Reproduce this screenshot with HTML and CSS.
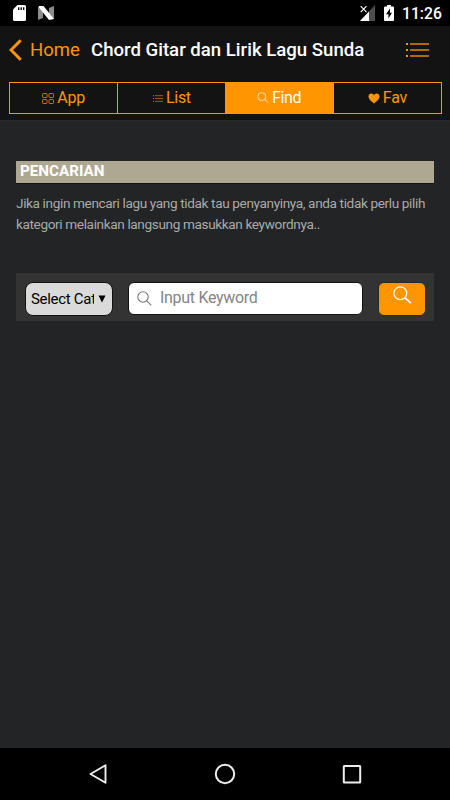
FILE: index.html
```html
<!DOCTYPE html>
<html lang="id">

<head>
    <meta charset="UTF-8">
    <meta name="viewport" content="width=device-width, initial-scale=1.0">
    <title>Chord Gitar dan Lirik Lagu Sunda</title>
    <link rel="stylesheet" href="styles.css">
</head>

<body>
    <div class="screen">
        <div class="statusbar">
            <svg class="sd-icon" width="13" height="16" viewBox="0 0 13 16">
                <path d="M4.5 0H11.5Q13 0 13 1.5V14.5Q13 16 11.5 16H1.5Q0 16 0 14.5V4.5Z" fill="#fff"/>
                <path d="M5.7 2.2V5M8.2 2.2V5M10.7 2.2V5" stroke="#000" stroke-width="1.3"/>
            </svg>
            <svg class="n-icon" width="16" height="14" viewBox="0 0 16 14">
                <path d="M0 1L5 3V12L0 14ZM16 0L11 2V11L16 13Z" fill="#8c8c8c"/>
                <path d="M1 0H5.5L16 13L11 14L0.5 1Z" fill="#fff"/>
            </svg>
            <span class="spacer"></span>
            <svg class="signal-icon" width="15" height="16" viewBox="0 0 15 16">
                <path d="M15 0V16H0Z" fill="#4c4c4c"/>
                <path d="M9 6.5V16H0Z" fill="#fff"/>
                <path d="M0 0H7V8H0Z" fill="#000"/>
                <path d="M0.7 1.2L6.5 7.2M6.5 1.2L0.7 7.2" stroke="#fff" stroke-width="1.1"/>
            </svg>
            <svg class="battery-icon" width="10" height="16" viewBox="0 0 10 16">
                <path d="M3 0H7V1.5H9Q10 1.5 10 2.5V15Q10 16 9 16H1Q0 16 0 15V2.5Q0 1.5 1 1.5H3Z" fill="#fff"/>
                <path d="M6 3.5L2 9.3H4.4V13.5L8 7.7H6Z" fill="#000"/>
            </svg>
            <span class="clock">11:26</span>
        </div>

        <div class="navbar">
            <a class="back">
                <svg width="13" height="22" viewBox="0 0 13 22">
                    <path d="M11.7 1.2L2 11L11.7 20.8" fill="none" stroke="#ff9500" stroke-width="3"/>
                </svg>
                <span>Home</span>
            </a>
            <h1 class="title">Chord Gitar dan Lirik Lagu Sunda</h1>
            <svg class="menu-icon" width="24" height="16" viewBox="0 0 24 16">
                <path d="M5 2H24M5 8H24M5 14H24" stroke="#e48500" stroke-width="1.7"/>
                <path d="M1 2H3M1 8H3M1 14H3" stroke="#ff9500" stroke-width="2.2"/>
            </svg>
        </div>

        <div class="subnavbar">
            <div class="segmented">
                <a class="tab">
                    <svg width="12" height="11" viewBox="0 0 12 11" fill="none" stroke="#c57400">
                        <rect x="0.5" y="0.5" width="4.5" height="4" rx="0.7"/>
                        <rect x="7" y="0.5" width="4.5" height="4" rx="0.7"/>
                        <rect x="0.5" y="6.5" width="4.5" height="4" rx="0.7"/>
                        <rect x="7" y="6.5" width="4.5" height="4" rx="0.7"/>
                    </svg>
                    <span>App</span>
                </a>
                <a class="tab">
                    <svg width="10" height="7" viewBox="0 0 10 7" stroke="#c57400">
                        <path d="M2 0.7H10M2 3.5H10M2 6.3H10" stroke-width="0.8"/>
                        <path d="M0 0.7H1M0 3.5H1M0 6.3H1"/>
                    </svg>
                    <span>List</span>
                </a>
                <a class="tab active">
                    <svg width="12" height="12" viewBox="0 0 12 12" fill="none" stroke="#ffe0b3">
                        <circle cx="4.8" cy="4.6" r="4"/>
                        <path d="M7.8 7.4L11.4 10.8"/>
                    </svg>
                    <span>Find</span>
                </a>
                <a class="tab">
                    <svg width="12" height="11" viewBox="0 0 12 11">
                        <path d="M6 10.5C4 8.7 0.5 6.5 0.5 3.5C0.5 1.6 1.7 0.6 3.2 0.6C4.6 0.6 5.5 1.4 6 2.4C6.5 1.4 7.4 0.6 8.8 0.6C10.3 0.6 11.5 1.6 11.5 3.5C11.5 6.5 8 8.7 6 10.5Z" fill="#ff9500"/>
                    </svg>
                    <span>Fav</span>
                </a>
            </div>
        </div>

        <div class="content">
            <h2 class="heading">PENCARIAN</h2>
            <p class="info">
                <span>Jika ingin mencari lagu yang tidak tau penyanyinya, anda tidak perlu pilih</span><br>
                <span>kategori melainkan langsung masukkan keywordnya..</span>
            </p>

            <div class="search-form">
                <div class="category">
                    <span class="category-label">Select Cat</span>
                    <svg width="8" height="8" viewBox="0 0 8 8">
                        <path d="M0.5 0.5H7.5L4 7.5Z" fill="#000"/>
                    </svg>
                </div>
                <div class="keyword">
                    <svg width="15" height="15" viewBox="0 0 15 15" fill="none" stroke="#777" stroke-width="1.1">
                        <circle cx="6" cy="6" r="5.2"/>
                        <path d="M9.8 9.8L14.3 14.3"/>
                    </svg>
                    <span>Input Keyword</span>
                </div>
                <div class="search-button">
                    <svg width="19" height="18" viewBox="0 0 19 18" fill="none" stroke="#fff">
                        <circle cx="7.3" cy="7.2" r="6.4" stroke-width="1.2"/>
                        <path d="M12 11.8L17.8 17.2" stroke-width="1.8"/>
                    </svg>
                </div>
            </div>
        </div>

        <div class="android-nav">
            <svg width="18" height="20" viewBox="0 0 18 20">
                <path d="M16.5 1.2V18.8L1.5 10Z" fill="none" stroke="#eee" stroke-width="1.9" stroke-linejoin="round"/>
            </svg>
            <svg class="home-icon" width="22" height="22" viewBox="0 0 22 22">
                <circle cx="11" cy="11" r="9.2" fill="none" stroke="#eee" stroke-width="2"/>
            </svg>
            <svg width="20" height="20" viewBox="0 0 20 20">
                <rect x="1.8" y="2" width="16.4" height="16.4" rx="0.5" fill="none" stroke="#eee" stroke-width="2"/>
            </svg>
        </div>
    </div>
</body>

</html>
```

FILE: styles.css
```css
html, body {
    height: 100%;
    margin: 0;
    font-family: Roboto, sans-serif;
}

svg {
    display: block;
    flex-shrink: 0;
}

.screen {
    display: flex;
    flex-direction: column;
    width: 450px;
    height: 800px;
    overflow: hidden;
    background-color: #222426;
    white-space: nowrap;
}

.statusbar {
    display: flex;
    align-items: flex-start;
    height: 26px;
    padding: 5px 9px 0 13px;
    box-sizing: border-box;
    background-color: #000;
    color: #fff;
}

.n-icon {
    margin: 1px 0 0 12px;
}

.spacer {
    flex: 1;
}

.battery-icon {
    margin: 0 8px 0 9px;
}

.clock {
    width: 39px;
    font-size: 15.7px;
    font-weight: 500;
    line-height: 18px;
}

.navbar {
    display: flex;
    align-items: center;
    height: 48px;
    padding: 0 21px 0 9px;
    background-color: #131313;
}

.back {
    display: flex;
    align-items: center;
    width: 82px;
    color: #ff9500;
    font-size: 18.5px;
}

.back span {
    margin-left: 8px;
}

.title {
    flex: 1;
    margin: 0;
    color: #fff;
    font-size: 18.6px;
    font-weight: 500;
}

.subnavbar {
    height: 47px;
    padding: 8px 8px 0 9px;
    box-sizing: border-box;
    background-color: #131313;
    border-bottom: 1px solid #292929;
}

.segmented {
    display: flex;
    height: 32px;
    box-sizing: border-box;
    border: 1px solid #ff9500;
}

.tab {
    display: flex;
    flex: 1;
    align-items: center;
    justify-content: center;
    padding-bottom: 2px;
    border-left: 1px solid #ff9500;
    color: #ff9500;
    font-size: 16px;
    letter-spacing: -0.3px;
}

.tab:first-child {
    border-left: none;
}

.tab svg {
    margin: 2px 3px 0 0;
}

.tab.active {
    margin-left: -1px;
    background-color: #ff9500;
    color: #fff;
}

.content {
    flex: 1;
    padding: 40px 16px 0;
}

.heading {
    height: 22px;
    margin: 0;
    padding-left: 4px;
    background-color: #aea893;
    border-bottom: 1px solid #111;
    color: #fff;
    font-size: 15.2px;
    font-weight: 700;
    line-height: 20px;
}

.info {
    margin: 9px 0 0;
    color: #aaa;
    font-size: 13.6px;
    letter-spacing: -0.37px;
    line-height: 21px;
}

.search-form {
    display: flex;
    height: 48px;
    margin-top: 38px;
    padding: 9px 8px 0 9px;
    box-sizing: border-box;
    background-color: #333;
}

.category {
    display: flex;
    align-items: center;
    width: 88px;
    height: 34px;
    margin-right: 15px;
    padding: 0 6px 0 5px;
    box-sizing: border-box;
    border: 1px solid #111;
    border-radius: 8px;
    background-color: #dadada;
    color: #000;
    font-size: 15px;
    letter-spacing: -0.3px;
}

.category-label {
    width: 64px;
    margin-right: 4px;
    padding-bottom: 1px;
    overflow: hidden;
}

.keyword {
    display: flex;
    align-items: center;
    width: 236px;
    height: 33px;
    margin-right: 15px;
    padding-left: 8px;
    box-sizing: border-box;
    border: 1px solid #111;
    border-radius: 6px;
    background-color: #fff;
    color: #858585;
    font-size: 16px;
    letter-spacing: -0.3px;
}

.keyword span {
    margin-left: 8px;
    padding-bottom: 3px;
}

.search-button {
    width: 48px;
    height: 34px;
    padding: 3px 0 0 14px;
    box-sizing: border-box;
    border: 1px solid #1d2b36;
    border-radius: 6px;
    background-color: #ff9500;
}

.android-nav {
    display: flex;
    align-items: center;
    justify-content: space-between;
    height: 52px;
    padding: 0 88px 0 89px;
    background-color: #000;
}

.home-icon {
    margin-left: 1px;
}
```
